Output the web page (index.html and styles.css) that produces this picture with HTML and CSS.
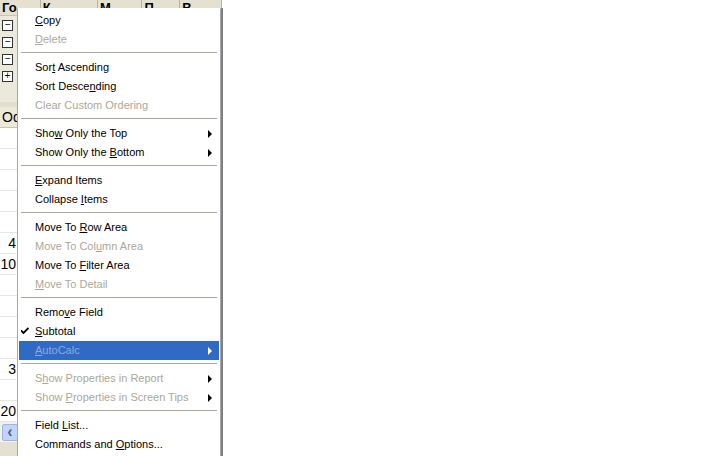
FILE: index.html
```html
<!DOCTYPE html>
<html lang="en">

<head>
    <meta charset="UTF-8">
    <title>PivotTable field menu</title>
    <link rel="stylesheet" href="styles.css">
</head>

<body>
    <div class="sheet">
        <div class="head-row">
            <div class="hcell c1">Го</div>
            <div class="hcell c2">К</div>
            <div class="hcell c3">М</div>
            <div class="hcell c4">П</div>
            <div class="hcell c5">В</div>
        </div>
        <div class="tree">
            <div class="tree-row"><span class="box">&minus;</span></div>
            <div class="tree-row"><span class="box">&minus;</span></div>
            <div class="tree-row"><span class="box">&minus;</span></div>
            <div class="tree-row"><span class="box">+</span></div>
        </div>
        <div class="band"></div>
        <div class="row od">Od</div>
        <div class="row"></div>
        <div class="row"></div>
        <div class="row"></div>
        <div class="row"></div>
        <div class="row"></div>
        <div class="row num">4</div>
        <div class="row num">10</div>
        <div class="row"></div>
        <div class="row"></div>
        <div class="row"></div>
        <div class="row"></div>
        <div class="row num">3</div>
        <div class="row"></div>
        <div class="row num">20</div>
        <div class="scroll-row"><span class="scroll-btn">&lsaquo;</span></div>
        <div class="foot"></div>
    </div>

    <div class="menu">
        <div class="item"><u>C</u>opy</div>
        <div class="item off"><u>D</u>elete</div>
        <div class="sep"></div>
        <div class="item">Sor<u>t</u> Ascending</div>
        <div class="item">Sort Desce<u>n</u>ding</div>
        <div class="item off">Clear Custom Orderin<u>g</u></div>
        <div class="sep"></div>
        <div class="item sub">Sho<u>w</u> Only the Top</div>
        <div class="item sub">Show Only the <u>B</u>ottom</div>
        <div class="sep"></div>
        <div class="item"><u>E</u>xpand Items</div>
        <div class="item">Collapse <u>I</u>tems</div>
        <div class="sep"></div>
        <div class="item">Move To <u>R</u>ow Area</div>
        <div class="item off">Move To Col<u>u</u>mn Area</div>
        <div class="item">Move To <u>F</u>ilter Area</div>
        <div class="item off"><u>M</u>ove To Detail</div>
        <div class="sep"></div>
        <div class="item">Remo<u>v</u>e Field</div>
        <div class="item checked">
            <svg class="check" width="8" height="8" viewBox="0 0 8 8">
                <path d="M0 3.5 L2.5 6 L7.5 1" fill="none" stroke="#000" stroke-width="1.8" />
            </svg>
            <u>S</u>ubtotal
        </div>
        <div class="item sub off active"><u>A</u>utoCalc</div>
        <div class="sep"></div>
        <div class="item sub off">S<u>h</u>ow Properties in Report</div>
        <div class="item sub off">Show <u>P</u>roperties in Screen Tips</div>
        <div class="sep"></div>
        <div class="item">Field <u>L</u>ist...</div>
        <div class="item">Commands and <u>O</u>ptions...</div>
    </div>
</body>

</html>
```

FILE: styles.css
```css
body {
    margin: 0;
    background-color: #fff;
    font-family: "Liberation Sans", Tahoma, sans-serif;
    font-size: 11px;
    color: #000;
    width: 720px;
    height: 456px;
    overflow: hidden;
    position: relative;
}

.sheet {
    width: 222px;
    display: flex;
    flex-direction: column;
}

.head-row {
    display: flex;
    height: 15px;
    background-color: #e4e1d1;
    border-bottom: 1px solid #c8c4b0;
}

.hcell {
    font-weight: bold;
    font-size: 13px;
    line-height: 16px;
    height: 15px;
    padding-left: 2px;
    border-right: 1px solid #b8b4a4;
    overflow: hidden;
}

.c1 { width: 39px; }
.c2 { width: 56px; }
.c3 { width: 43px; }
.c4 { width: 36px; }
.c5 { width: 40px; }

.tree {
    background-color: #ebe9db;
    padding-top: 1px;
    height: 85px;
}

.tree-row {
    height: 17px;
    display: flex;
    align-items: center;
    padding-left: 2px;
}

.box {
    width: 9px;
    height: 9px;
    border: 1px solid #333;
    background-color: #fff;
    font-family: "Liberation Mono", monospace;
    font-size: 10px;
    line-height: 9px;
    text-align: center;
    box-sizing: content-box;
}

.band {
    height: 5px;
    background-color: #e2dfd0;
}

.row {
    height: 20px;
    border-bottom: 1px solid #e6e6e6;
    font-size: 14px;
    line-height: 21px;
}

.od {
    background-color: #ece9d8;
    padding-left: 2px;
    border-bottom-color: #c8c4b0;
}

.num {
    text-align: right;
    width: 16px;
}

.scroll-row {
    height: 20px;
    display: flex;
    align-items: center;
    padding-left: 2px;
    background-color: #f3f2ea;
}

.scroll-btn {
    width: 14px;
    height: 15px;
    background-color: #c3d3fb;
    border: 1px solid #9db4e8;
    border-radius: 2px;
    color: #4d6185;
    font-size: 16px;
    font-weight: bold;
    line-height: 13px;
    text-align: center;
}

.foot {
    height: 14px;
    background-color: #e4e1d1;
}

/* popup menu */
.menu {
    position: absolute;
    left: 17px;
    top: 8px;
    width: 200px;
    padding: 2px 1px;
    background-color: #fff;
    border: 1px solid #a7a6aa;
    border-top-color: #fff;
    box-shadow: 2px 0 0 #808080;
}

.item {
    position: relative;
    height: 19px;
    line-height: 19px;
    padding-left: 16px;
    white-space: nowrap;
}

.off {
    color: #aca899;
}

.sub::after {
    content: "";
    position: absolute;
    right: 7px;
    top: 6px;
    border-top: 4px solid transparent;
    border-bottom: 4px solid transparent;
    border-left: 4px solid #000;
}

.active {
    background-color: #316ac5;
    color: #8fa9db;
}

.active::after {
    border-left-color: #fff;
}

.check {
    position: absolute;
    left: 2px;
    top: 5px;
}

.sep {
    height: 9px;
    box-sizing: border-box;
    padding: 3px 2px 0;
}

.sep::before {
    content: "";
    display: block;
    border-top: 1px solid #aca899;
}
```
